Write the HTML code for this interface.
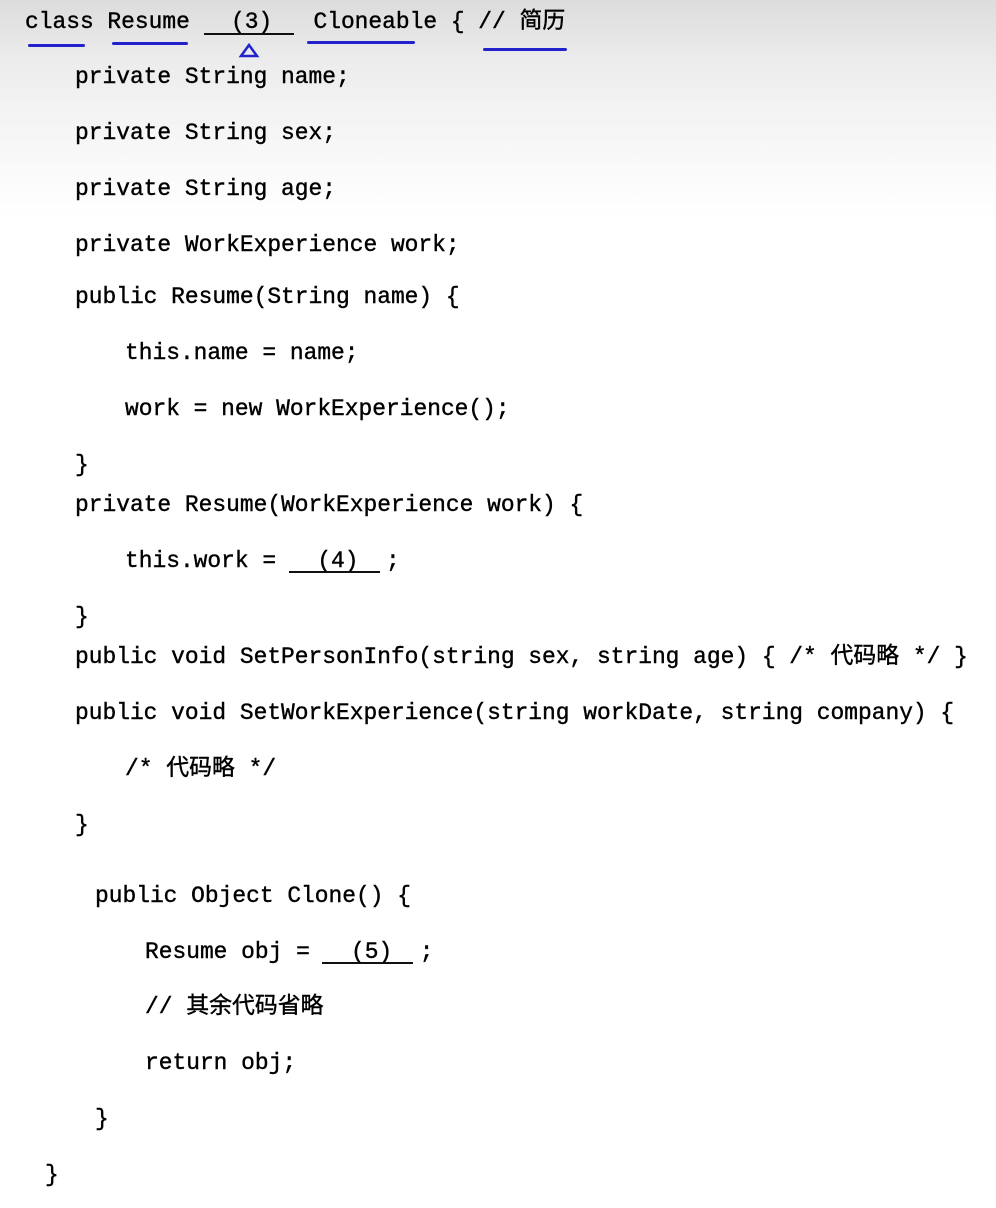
<!DOCTYPE html>
<html><head><meta charset="utf-8"><style>
html,body{margin:0;padding:0}
body{width:996px;height:1208px;position:relative;overflow:hidden;background:linear-gradient(#dcdcdc 0px,#ececec 60px,#f8f8f8 150px,#fff 220px);}
.l{position:absolute;white-space:pre;font-family:"Liberation Mono","Noto Sans CJK SC",monospace;font-size:22.9px;line-height:28px;color:#000;-webkit-text-stroke:0.4px #000;}
.u{position:absolute;height:2px;background:#111}
.b{position:absolute;height:3px;background:#2222cc;border-radius:2px}
</style></head><body>
<div class="l" style="left:25px;top:8px">class Resume   (3)   Cloneable { // 简历</div>
<div class="u" style="left:204px;top:33px;width:90px"></div>
<div class="b" style="left:28px;top:44px;width:57px"></div>
<div class="b" style="left:112px;top:42px;width:76px"></div>
<div class="b" style="left:307px;top:41px;width:108px"></div>
<div class="b" style="left:483px;top:48px;width:84px"></div>
<svg style="position:absolute;left:238px;top:42px" width="24" height="16"><path d="M3 14 L11 3 L19 14 Z" fill="none" stroke="#2222cc" stroke-width="2.5"/></svg>
<div class="l" style="left:75px;top:63px">private String name;</div>
<div class="l" style="left:75px;top:119px">private String sex;</div>
<div class="l" style="left:75px;top:175px">private String age;</div>
<div class="l" style="left:75px;top:231px">private WorkExperience work;</div>
<div class="l" style="left:75px;top:283px">public Resume(String name) {</div>
<div class="l" style="left:125px;top:339px">this.name = name;</div>
<div class="l" style="left:125px;top:395px">work = new WorkExperience();</div>
<div class="l" style="left:75px;top:451px">}</div>
<div class="l" style="left:75px;top:491px">private Resume(WorkExperience work) {</div>
<div class="l" style="left:125px;top:547px">this.work =   (4)  ;</div>
<div class="u" style="left:289px;top:571px;width:91px"></div>
<div class="l" style="left:75px;top:603px">}</div>
<div class="l" style="left:75px;top:643px">public void SetPersonInfo(string sex, string age) { /* 代码略 */ }</div>
<div class="l" style="left:75px;top:699px">public void SetWorkExperience(string workDate, string company) {</div>
<div class="l" style="left:125px;top:755px">/* 代码略 */</div>
<div class="l" style="left:75px;top:811px">}</div>
<div class="l" style="left:95px;top:882px">public Object Clone() {</div>
<div class="l" style="left:145px;top:938px">Resume obj =   (5)  ;</div>
<div class="u" style="left:322px;top:962px;width:91px"></div>
<div class="l" style="left:145px;top:993px">// 其余代码省略</div>
<div class="l" style="left:145px;top:1049px">return obj;</div>
<div class="l" style="left:95px;top:1105px">}</div>
<div class="l" style="left:45px;top:1161px">}</div>
</body></html>
